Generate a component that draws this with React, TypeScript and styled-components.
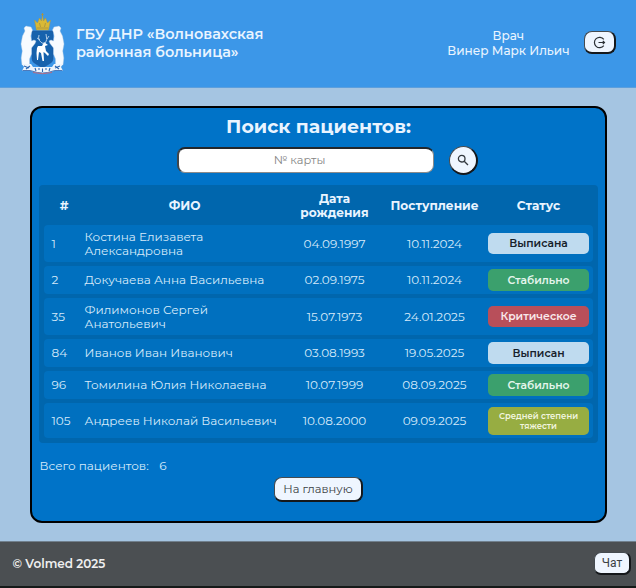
import React from "react";
import styled, { createGlobalStyle, css } from "styled-components";

const GlobalStyle = createGlobalStyle`
  * { box-sizing: border-box; }
  body {
    margin: 0;
    background: #a5c5e2;
    font-family: "Montserrat", Inter, "Noto Sans", sans-serif;
    color: #e9f4ff;
  }
`;

const Page = styled.div`
  height: 588px;
  display: flex;
  flex-direction: column;
  overflow: hidden;
`;

const Header = styled.header`
  height: 88px;
  flex: none;
  display: flex;
  align-items: center;
  padding: 0 20px;
  background: #3c97e8;
  border-bottom: 1px solid #5c9fdd;
`;

const Crest = styled.svg`
  width: 45px;
  height: 62px;
  flex: none;
`;

const Hospital = styled.div`
  margin-left: 11px;
  font-size: 14.45px;
  line-height: 17.5px;
  font-weight: 600;
  white-space: pre;
`;

const Doctor = styled.div`
  margin-left: auto;
  margin-right: 14.5px;
  font-size: 12.05px;
  line-height: 14.5px;
  font-weight: 500;
  text-align: center;
  white-space: nowrap;
`;

const raised = css`
  border-style: solid;
  border-width: 1px 2px 2px 1px;
  border-color: #454b50 #15181b #15181b #454b50;
  background: #eff6ff;
  color: #3b3f44;
  font-family: inherit;
  padding: 0;
  display: flex;
  align-items: center;
  justify-content: center;
`;

const LogoutButton = styled.button`
  ${raised}
  width: 32px;
  height: 23px;
  margin-top: -2px;
  border-radius: 8px;
`;

const Main = styled.main`
  height: 453px;
  flex: none;
  padding: 18px 29px 18px 30px;
`;

const Card = styled.section`
  height: 417px;
  border: 2px solid #000;
  border-radius: 12px;
  background: #0073c8;
  padding: 8px 7px 0;
  display: flex;
  flex-direction: column;
`;

const Title = styled.h1`
  margin: 0;
  font-size: 18.9px;
  line-height: 22px;
  font-weight: 700;
  text-align: center;
`;

const SearchRow = styled.div`
  display: flex;
  align-items: center;
  height: 30px;
  margin-top: 7px;
  padding-left: 138px;
  gap: 15px;
`;

const SearchInput = styled.input`
  width: 257px;
  height: 26px;
  border-style: solid;
  border-width: 2px 1px 1px 2px;
  border-color: #22272c #8b8b8b #8b8b8b #42464a;
  border-radius: 8px;
  background: #fff;
  padding: 0 13px 1px 0;
  text-align: center;
  font-family: inherit;
  font-size: 11.4px;
  &::placeholder { color: #858585; opacity: 1; }
`;

const SearchButton = styled.button`
  ${raised}
  width: 29px;
  height: 29px;
  border-radius: 50%;
`;

const Table = styled.div`
  margin-top: 10px;
  height: 258px;
  border-radius: 4px;
  background: #0066ad;
  padding: 0 5px;
  display: flex;
  flex-direction: column;
  gap: 4px;
`;

const columns = css`
  display: grid;
  grid-template-columns: 33px 200px 100px 100px 104px;
  align-items: center;
  padding-left: 7.5px;
`;

const HeadRow = styled.div`
  ${columns}
  height: 36px;
  padding-top: 5px;
  font-size: 12.15px;
  line-height: 14px;
  font-weight: 700;
  text-align: center;
`;

const HeadCell = styled.div<{ $shift?: number }>`
  margin-left: ${(p) => p.$shift ?? 0}px;
`;

const Row = styled.div<{ $h: number }>`
  ${columns}
  height: ${(p) => p.$h}px;
  border-radius: 4px;
  background: #0070bf;
  color: #d6eafa;
  font-size: 12px;
  line-height: 14.5px;
`;

const Cell = styled.div<{ $center?: boolean }>`
  padding-top: 1px;
  text-align: ${(p) => (p.$center ? "center" : "left")};
  white-space: pre;
`;

type Tone = "pale" | "green" | "red" | "olive";
const tones: Record<Tone, [string, string]> = {
  pale: ["#bfdbef", "#16212b"],
  green: ["#3ba06d", "#e4f5ec"],
  red: ["#b84f5a", "#f9e9eb"],
  olive: ["#97ad42", "#f1f5df"],
};

const Badge = styled.div<{ $tone: Tone; $small?: boolean }>`
  width: 101px;
  height: ${(p) => (p.$small ? 28 : 21.5)}px;
  margin-left: 3.5px;
  border-radius: 5px;
  background: ${(p) => tones[p.$tone][0]};
  color: ${(p) => tones[p.$tone][1]};
  display: flex;
  align-items: center;
  justify-content: center;
  text-align: center;
  white-space: pre;
  padding-top: 1px;
  font-weight: 600;
  font-size: ${(p) => (p.$small ? 8.4 : 10.8)}px;
  line-height: ${(p) => (p.$small ? 10 : 14)}px;
`;

const Total = styled.div`
  margin: 15px 0 0 0.5px;
  font-size: 12px;
  line-height: 15px;
  color: #d6eafa;
  display: flex;
  gap: 10.5px;
`;

const HomeButton = styled.button`
  ${raised}
  align-self: center;
  margin-top: 4px;
  width: 89px;
  height: 25px;
  border-radius: 8px;
  font-size: 11.5px;
`;

const Footer = styled.footer`
  flex: 1;
  display: flex;
  align-items: center;
  justify-content: space-between;
  padding: 0 5px 2px 12.5px;
  background: #4b4f52;
  border-top: 1px solid #71808d;
  border-bottom: 2px solid #151a19;
  color: #f0f0f0;
  font-size: 12px;
  font-weight: 600;
`;

const ChatButton = styled.button`
  ${raised}
  width: 37px;
  height: 23px;
  border-radius: 7px;
  font-family: Roboto, sans-serif;
  font-size: 12px;
`;

const Bear = () => (
  <path
    d="M12.5 17L11 14L8 13.5L6 13L4 15L5 18L2.5 23L1 31L2.3 38L1.2 45L2 52H9.5V46L11.5 41V35L15 30.5L16 28L14 27L11.5 28L10.8 23L11.5 19.5Z"
    fill="#f7fbff"
    stroke="#b5cce2"
    strokeWidth=".4"
  />
);

const CoatOfArms = () => (
  <Crest viewBox="0 0 45 62">
    <path d="M12 18H33V46Q33 49 29 51L22.5 55L16 51Q12 49 12 46Z" fill="#1662ad" stroke="#2457a0" strokeWidth=".6" />
    <Bear />
    <g transform="translate(45 0) scale(-1 1)"><Bear /></g>
    <path d="M14.5 7L17.5 10L19.5 5L21.5 8L22.5 2L23.5 8L25.5 5L27.5 10L30.5 7L28.5 17H16.5Z" fill="#d9b936" stroke="#ac9640" strokeWidth=".5" />
    <path d="M22.5 0V3M21.3 1.5H23.7M17 15H28M19.5 10L20.5 14M25.5 10L24.5 14" fill="none" stroke="#a99340" strokeWidth=".9" />
    <path d="M18 33L22 33L24 29L28 32L25 33L26 38L29 41L28 43L25 40L23.5 39L24 48H22.5L21 40L19 39L18 47H17L16.5 40L17 35Z" fill="#fff" />
    <path d="M24 31Q17 28 19 22M20 27L17 25M25 31Q28 27 26 21M27 26L29 23" fill="none" stroke="#d4e5f5" strokeWidth=".8" />
    <path d="M2 51L11 51L13 54L32 54L34 51L43 51L41 54L43 58L34 58Q22.5 63 11 58L2 58L4 54Z" fill="#eef5fc" />
    <path d="M2.5 57.5H10L12 58Q22.5 62 33 58L35 57.5H42.5" fill="none" stroke="#245ba8" strokeWidth=".8" />
    <path d="M13 59.5Q22.5 62 32 59.5" fill="none" stroke="#b96479" strokeWidth=".9" />
    <path d="M4 53L9 55M6 56L10 53M15 55L16 58M18 56H20M22.5 55.5V59M25 56H27M30 55L29 58M35 55L40 53M35 53L39 56" stroke="#2865b2" strokeWidth="1.1" />
  </Crest>
);

type Patient = {
  id: string;
  name: string;
  born: string;
  admitted: string;
  status: string;
  tone: Tone;
  h: number;
  small?: boolean;
};

const patients: Patient[] = [
  { id: "1", name: "Костина Елизавета\nАлександровна", born: "04.09.1997", admitted: "10.11.2024", status: "Выписана", tone: "pale", h: 37 },
  { id: "2", name: "Докучаева Анна Васильевна", born: "02.09.1975", admitted: "10.11.2024", status: "Стабильно", tone: "green", h: 28 },
  { id: "35", name: "Филимонов Сергей\nАнатольевич", born: "15.07.1973", admitted: "24.01.2025", status: "Критическое", tone: "red", h: 37 },
  { id: "84", name: "Иванов Иван Иванович", born: "03.08.1993", admitted: "19.05.2025", status: "Выписан", tone: "pale", h: 28 },
  { id: "96", name: "Томилина Юлия Николаевна", born: "10.07.1999", admitted: "08.09.2025", status: "Стабильно", tone: "green", h: 28 },
  { id: "105", name: "Андреев Николай Васильевич", born: "10.08.2000", admitted: "09.09.2025", status: "Средней степени\nтяжести", tone: "olive", h: 35, small: true },
];

export default function App() {
  return (
    <Page>
      <GlobalStyle />
      <Header>
        <CoatOfArms />
        <Hospital>
          <div>ГБУ ДНР «Волновахская</div>
          <div>районная больница»</div>
        </Hospital>
        <Doctor>
          <div>Врач</div>
          <div>Винер Марк Ильич</div>
        </Doctor>
        <LogoutButton aria-label="Выйти">
          <svg width="13" height="13" viewBox="0 0 13 13" fill="none" stroke="#2b3035" strokeWidth="1.2">
            <path d="M10.8 3.4A5.2 5.2 0 1 0 10.8 9.6M5.5 6.5H11.5M9.8 4.8L11.5 6.5L9.8 8.2" />
          </svg>
        </LogoutButton>
      </Header>
      <Main>
        <Card>
          <Title>Поиск пациентов:</Title>
          <SearchRow>
            <SearchInput placeholder="№ карты" />
            <SearchButton aria-label="Найти">
              <svg width="12" height="12" viewBox="0 0 12 12" fill="none" stroke="#343a40" strokeWidth="1.3">
                <circle cx="4.7" cy="4.7" r="3.3" />
                <path d="M7.2 7.2L11 11" />
              </svg>
            </SearchButton>
          </SearchRow>
          <Table>
            <HeadRow>
              <HeadCell $shift={-8}>#</HeadCell>
              <HeadCell>ФИО</HeadCell>
              <HeadCell>Дата<br />рождения</HeadCell>
              <HeadCell>Поступление</HeadCell>
              <HeadCell $shift={4}>Статус</HeadCell>
            </HeadRow>
            {patients.map((p) => (
              <Row key={p.id} $h={p.h}>
                <Cell>{p.id}</Cell>
                <Cell>{p.name}</Cell>
                <Cell $center>{p.born}</Cell>
                <Cell $center>{p.admitted}</Cell>
                <Badge $tone={p.tone} $small={p.small}>{p.status}</Badge>
              </Row>
            ))}
          </Table>
          <Total><span>Всего пациентов:</span><span>6</span></Total>
          <HomeButton>На главную</HomeButton>
        </Card>
      </Main>
      <Footer>
        <span>© Volmed 2025</span>
        <ChatButton>Чат</ChatButton>
      </Footer>
    </Page>
  );
}
